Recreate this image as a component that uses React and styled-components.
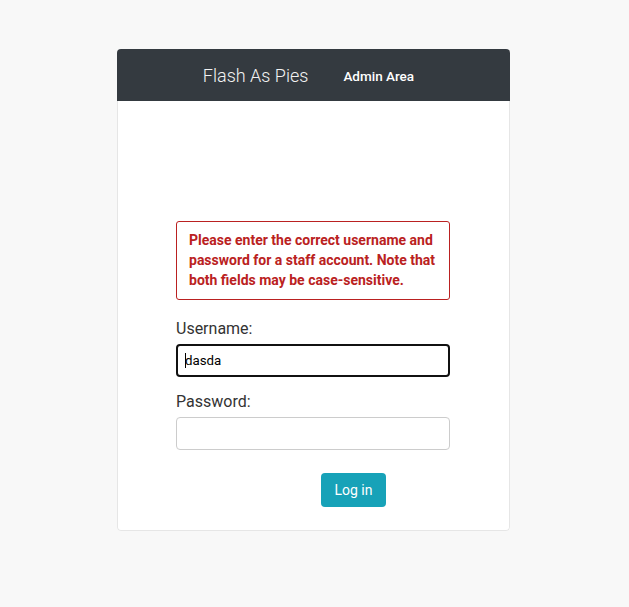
import React from "react";
import styled, { createGlobalStyle } from "styled-components";

const Global = createGlobalStyle`
  html, body { margin: 0; padding: 0; background: #f8f8f8; }
  body { font-family: Roboto, "Liberation Sans", Arial, sans-serif; }
  * { box-sizing: border-box; }
`;

const Page = styled.div`
  padding-top: 49px;
  display: flex;
  justify-content: center;
`;

const Card = styled.div`
  width: 393px;
  margin-left: -2px;
  border-radius: 4px;
  overflow: hidden;
`;

const Header = styled.div`
  height: 52px;
  background: #343a40;
  display: flex;
  align-items: center;
  justify-content: center;
  gap: 35px;
  padding-right: 10px;
`;

const Brand = styled.span`
  color: #f2f2f2;
  font-size: 18px;
  font-weight: 300;
`;

const NavLink = styled.span`
  color: #fff;
  font-size: 13.5px;
  font-weight: 500;
  padding-top: 1px;
`;

const Body = styled.div`
  background: #fff;
  border: 1px solid #e6e6e6;
  border-top: none;
  border-radius: 0 0 4px 4px;
  padding: 120px 59px 23px 58px;
`;

const ErrorNote = styled.p`
  margin: 0;
  border: 1px solid #ba2121;
  border-radius: 3px;
  color: #ba2121;
  font-size: 14px;
  font-weight: 700;
  line-height: 20px;
  padding: 8px 12px 9px 12px;
`;

const Field = styled.div`
  display: flex;
  flex-direction: column;
  margin-top: ${(p) => p.$top}px;
`;

const Label = styled.label`
  color: #333;
  font-size: 16px;
  line-height: 24px;
  margin-bottom: 3px;
`;

const Input = styled.div`
  height: 33px;
  border: ${(p) => (p.$focus ? "2px solid #111" : "1px solid #ccc")};
  border-radius: 4px;
  display: flex;
  align-items: center;
  padding-left: ${(p) => (p.$focus ? 7 : 8)}px;
  font-family: Roboto, "Liberation Sans", Arial, sans-serif;
  font-size: 13.3px;
  color: #000;
`;

const Caret = styled.span`
  display: inline-block;
  width: 1px;
  height: 15px;
  background: #000;
  margin-right: -1px;
`;

const SubmitRow = styled.div`
  margin-top: 23px;
  padding-left: 145px;
`;

const Button = styled.button`
  width: 65px;
  height: 34px;
  background: #17a2b8;
  color: #fff;
  border: none;
  border-radius: 4px;
  font-family: Roboto, "Liberation Sans", Arial, sans-serif;
  font-size: 14px;
  padding: 0;
`;

export default function App() {
  return (
    <>
      <Global />
      <Page>
        <Card>
          <Header>
            <Brand>Flash As Pies</Brand>
            <NavLink>Admin Area</NavLink>
          </Header>
          <Body>
            <ErrorNote>
              Please enter the correct username and password for a staff
              account. Note that both fields may be case-sensitive.
            </ErrorNote>
            <Field $top={17}>
              <Label>Username:</Label>
              <Input $focus>
                <Caret />
                dasda
              </Input>
            </Field>
            <Field $top={13}>
              <Label>Password:</Label>
              <Input />
            </Field>
            <SubmitRow>
              <Button>Log in</Button>
            </SubmitRow>
          </Body>
        </Card>
      </Page>
    </>
  );
}
